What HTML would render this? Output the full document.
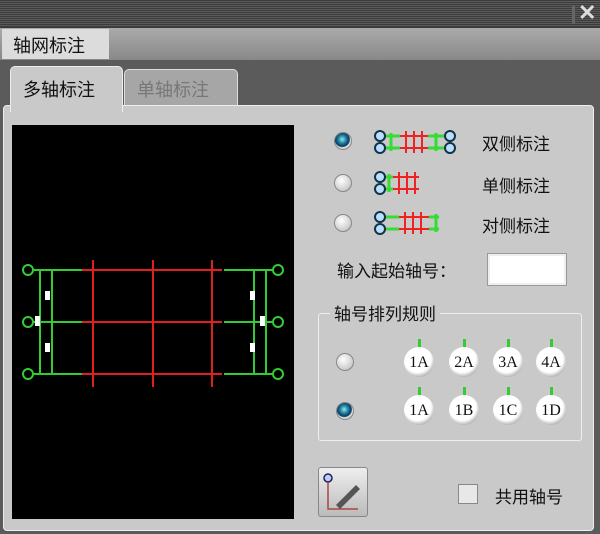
<!DOCTYPE html>
<html><head><meta charset="utf-8"><style>
body{margin:0;width:600px;height:534px;background:#3a3a3a;position:relative;overflow:hidden;font-family:"Liberation Sans","Noto Sans CJK SC",sans-serif;}
.a{position:absolute}
.title{left:0;top:0;width:600px;height:27px;background:repeating-linear-gradient(0deg,#3c3c3c 0 1px,#5a5a5a 1px 2px),#444;}
.t{font-size:17px;color:#111;white-space:nowrap}
.radio{width:16px;height:16px;border-radius:50%;background:radial-gradient(circle at 40% 35%,#fff,#ccc 70%,#999);border:1px solid #888}
.radio.on{background:radial-gradient(circle at 45% 40%,#8ed 0,#1a6f9a 35%,#073a5a 55%,#ddd 62%,#aaa)}
.c{width:30px;height:30px;border-radius:50%;background:radial-gradient(circle at 45% 40%,#fff 55%,#ccc 68%,#556);font-family:"Liberation Serif",serif;font-size:16px;text-align:center;line-height:31px;color:#111}
.c:before{content:"";position:absolute;left:14px;top:-8px;width:3px;height:8px;background:#3c3}
</style></head><body>
<div class="a title"></div>
<div class="a" style="left:572px;top:6px;width:3px;height:18px;background:#666"></div>
<div class="a" style="left:578px;top:0;font-size:22px;font-weight:bold;color:#ddd">✕</div>
<div class="a" style="left:0;top:28px;width:600px;height:32px;background:linear-gradient(#aaa,#888)"></div>
<div class="a" style="left:2px;top:29px;width:107px;height:30px;background:#dcdcdc"></div>
<div class="a t" style="left:13px;top:32px;font-size:18px">轴网标注</div>
<div class="a" style="left:0;top:60px;width:600px;height:474px;background:#5b5b5b"></div>
<div class="a" style="left:124px;top:69px;width:112px;height:38px;background:#a6a6a6;border:1px solid #ddd;border-radius:5px 5px 0 0"></div>
<div class="a t" style="left:137px;top:76px;color:#777;font-size:18px">单轴标注</div>
<div class="a" style="left:3px;top:105px;width:589px;height:424px;background:#c9c9c9;border:1px solid #eee;border-radius:4px"></div>
<div class="a" style="left:10px;top:66px;width:111px;height:45px;background:#c9c9c9;border:1px solid #eee;border-bottom:none;border-radius:5px 5px 0 0"></div>
<div class="a t" style="left:23px;top:76px;font-size:18px">多轴标注</div>
<svg class="a" style="left:12px;top:125px" width="282" height="394">
<rect width="282" height="394" fill="#000"/>
<g stroke="#e02020" stroke-width="2"><line x1="70" y1="145" x2="210" y2="145"/><line x1="70" y1="197" x2="210" y2="197"/><line x1="70" y1="249" x2="210" y2="249"/>
<line x1="81" y1="135" x2="81" y2="262"/><line x1="141" y1="135" x2="141" y2="262"/><line x1="200" y1="135" x2="200" y2="262"/></g>
<g stroke="#3c3" stroke-width="2" fill="none"><path d="M20 145H70M20 197H70M20 249H70M212 145H262M212 197H262M212 249H262M28 145V249M40 145V249M242 145V249M254 145V249"/>
<circle cx="16" cy="145" r="5"/><circle cx="16" cy="197" r="5"/><circle cx="16" cy="249" r="5"/><circle cx="266" cy="145" r="5"/><circle cx="266" cy="197" r="5"/><circle cx="266" cy="249" r="5"/></g>
<g fill="#fff"><rect x="33" y="166" width="5" height="9"/><rect x="33" y="218" width="5" height="9"/><rect x="23" y="191" width="5" height="10"/><rect x="238" y="166" width="5" height="9"/><rect x="238" y="218" width="5" height="9"/><rect x="248" y="191" width="5" height="10"/></g>
</svg>
<div class="a radio on" style="left:334px;top:132px"></div>
<div class="a radio" style="left:334px;top:174px"></div>
<div class="a radio" style="left:334px;top:214px"></div>
<svg class="a" style="left:373px;top:128px" width="90" height="112">
<g stroke="#e22" stroke-width="2"><path d="M27 8H55M27 20H55M33 3V25M41 3V25M49 3V25"/><path d="M20 49H46M20 61H46M26 44V66M34 44V66M42 44V66"/><path d="M26 89H56M26 101H56M32 84V106M40 84V106M48 84V106"/></g>
<g stroke="#3d3" stroke-width="3"><path d="M9 8H27M9 20H27M55 8H73M55 20H73M18 5V23M63 5V23M13 49H20M13 61H20M16 46V64M9 89H26M9 101H26M56 89H66M56 101H66M63 86V104"/></g>
<g fill="#bdf" stroke="#134" stroke-width="2"><circle cx="7" cy="8" r="5"/><circle cx="7" cy="20" r="5"/><circle cx="77" cy="8" r="5"/><circle cx="77" cy="20" r="5"/><circle cx="7" cy="49" r="5"/><circle cx="7" cy="61" r="5"/><circle cx="7" cy="89" r="5"/><circle cx="7" cy="101" r="5"/></g>
</svg>
<div class="a t" style="left:482px;top:130px">双侧标注</div>
<div class="a t" style="left:482px;top:172px">单侧标注</div>
<div class="a t" style="left:482px;top:212px">对侧标注</div>
<div class="a t" style="left:337px;top:257px">输入起始轴号：</div>
<div class="a" style="left:487px;top:253px;width:78px;height:31px;background:#fff;border:1px solid #999;box-shadow:inset 0 0 0 2px #eee"></div>
<div class="a" style="left:318px;top:313px;width:262px;height:126px;border:1px solid #eee;border-radius:3px"></div>
<div class="a t" style="left:330px;top:300px;background:#c9c9c9;padding:0 4px">轴号排列规则</div>
<div class="a radio" style="left:336px;top:353px"></div>
<div class="a radio on" style="left:336px;top:402px"></div>
<div class="a c" style="left:404px;top:347px">1A</div><div class="a c" style="left:449px;top:347px">2A</div><div class="a c" style="left:493px;top:347px">3A</div><div class="a c" style="left:536px;top:347px">4A</div>
<div class="a c" style="left:404px;top:395px">1A</div><div class="a c" style="left:449px;top:395px">1B</div><div class="a c" style="left:493px;top:395px">1C</div><div class="a c" style="left:536px;top:395px">1D</div>
<div class="a" style="left:318px;top:467px;width:48px;height:48px;background:linear-gradient(#eee,#bbb);border:1px solid #888;border-radius:3px"></div>
<svg class="a" style="left:318px;top:467px" width="50" height="50"><circle cx="10" cy="11" r="4" fill="#bcf" stroke="#225" stroke-width="1.5"/><path d="M10 15V42H40" stroke="#a44" stroke-width="1.5" fill="none"/><path d="M18 38L38 18L42 22L22 42Z" fill="#555"/></svg>
<div class="a" style="left:458px;top:484px;width:18px;height:18px;background:#e8e8e8;border:1px solid #888"></div>
<div class="a t" style="left:495px;top:483px">共用轴号</div>
</body></html>
